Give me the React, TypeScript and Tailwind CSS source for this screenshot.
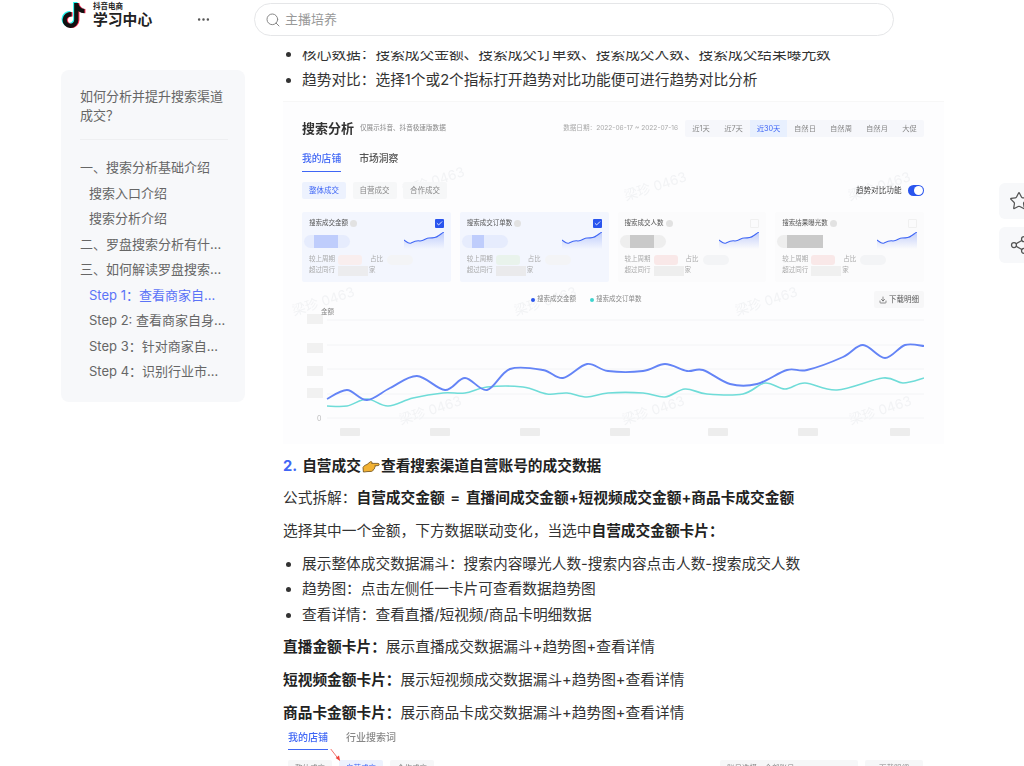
import { Search, Star, Share2, Download, Check, Ellipsis } from "lucide-react";
import { FaTiktok } from "react-icons/fa6";

const tocItems = [
  { label: "一、搜索分析基础介绍", indent: false },
  { label: "搜索入口介绍", indent: true },
  { label: "搜索分析介绍", indent: true },
  { label: "二、罗盘搜索分析有什么作用和价值", indent: false },
  { label: "三、如何解读罗盘搜索分析的数据", indent: false },
  { label: "Step 1：查看商家自身搜索成交", indent: true, active: true },
  { label: "Step 2: 查看商家自身搜索成交趋势", indent: true },
  { label: "Step 3：针对商家自身搜索问题", indent: true },
  { label: "Step 4：识别行业市场搜索机会", indent: true },
];

const ranges = [
  { label: "近1天", w: "w-[32px]" },
  { label: "近7天", w: "w-[33px]" },
  { label: "近30天", w: "w-[37px]" },
  { label: "自然日", w: "w-[36px]" },
  { label: "自然周", w: "w-[36px]" },
  { label: "自然月", w: "w-[36px]" },
  { label: "大促", w: "w-[29px]" },
];

const cards = [
  { title: "搜索成交金额", checked: true, smudge: "bg-[#f9eeee]", second: "bg-[#ececee]", valueW: "w-[24px]" },
  { title: "搜索成交订单数", checked: true, smudge: "bg-[#e9f3ec]", second: "bg-[#eaeaec]", valueW: "w-[12px]" },
  { title: "搜索成交人数", checked: false, smudge: "bg-[#f9e8e8]", second: "bg-[#eeeeee]", valueW: "w-[24px]" },
  { title: "搜索结果曝光数", checked: false, smudge: "bg-[#f9e8e8]", second: "bg-[#f0f0f0]", valueW: "w-[36px]" },
];

const blueLine: [number, number][] = [
  [327, 398], [347, 389], [367, 399], [390, 387], [417, 375], [445, 389], [465, 377], [487, 389], [510, 368],
  [543, 369], [563, 377], [587, 363], [608, 370], [643, 370], [665, 363], [687, 370], [703, 369], [730, 383],
  [757, 383], [787, 369], [807, 369], [843, 356], [863, 344], [885, 357], [905, 344], [924, 345],
];

const tealLine: [number, number][] = [
  [327, 405], [347, 405], [367, 398], [388, 405], [413, 397], [443, 392], [465, 392], [487, 386], [523, 386],
  [547, 393], [567, 392], [587, 396], [608, 392], [643, 392], [665, 396], [685, 388], [707, 393], [743, 393],
  [765, 382], [785, 388], [805, 382], [837, 389], [883, 377], [903, 382], [924, 377],
];

const watermarks = [
  "left-[118px] top-[67px]", "left-[340px] top-[72px]", "left-[564px] top-[72px]",
  "left-[8px] top-[187px]", "left-[230px] top-[187px]", "left-[451px] top-[187px]",
  "left-[115px] top-[296px]", "left-[338px] top-[296px]", "left-[565px] top-[296px]",
];

// catmull-rom through the points, good enough for the chart curves
function smooth(pts: [number, number][]) {
  let d = `M${pts[0][0]} ${pts[0][1]}`;
  for (let i = 0; i < pts.length - 1; i++) {
    const p0 = pts[i - 1] ?? pts[i];
    const p1 = pts[i];
    const p2 = pts[i + 1];
    const p3 = pts[i + 2] ?? p2;
    const c1x = p1[0] + (p2[0] - p0[0]) / 6;
    const c1y = p1[1] + (p2[1] - p0[1]) / 6;
    const c2x = p2[0] - (p3[0] - p1[0]) / 6;
    const c2y = p2[1] - (p3[1] - p1[1]) / 6;
    d += ` C${c1x} ${c1y} ${c2x} ${c2y} ${p2[0]} ${p2[1]}`;
  }
  return d;
}

function Logo() {
  return (
    <div className="relative h-[26px] w-[25px] shrink-0">
      <FaTiktok className="absolute left-0 top-0 h-[25px] w-[23px] text-[#25f4ee]" />
      <FaTiktok className="absolute left-[2px] top-[1px] h-[25px] w-[23px] text-[#fe2c55]" />
      <FaTiktok className="absolute left-[1px] top-[0.5px] h-[25px] w-[23px] text-[#111111]" />
    </div>
  );
}

function HandIcon() {
  return (
    <svg viewBox="0 0 18 13" className="mx-[1px] inline-block h-[13px] w-[18px] align-[-2px]">
      <path
        d="M1 7.5 C2 5.5 3.5 5 5 4.5 L8 2 C9 1.3 10 1.6 10 2.6 L9.6 3.4 L16 3.4 C17.6 3.4 17.6 5.6 16 5.6 L12.8 5.8 C13.6 6.6 13.2 7.6 12.4 7.8 C12.8 8.8 12 9.6 11.2 9.6 C11.2 10.8 10.2 11.4 9.2 11.4 L5 11.6 C3.6 11.8 2.4 12 1.4 12 Z"
        fill="#f2b233"
        stroke="#6b4a12"
        strokeWidth="0.8"
      />
    </svg>
  );
}

function Sparkline() {
  return (
    <svg viewBox="0 0 40 17" className="h-[17px] w-[40px] shrink-0">
      <defs>
        <linearGradient id="spark" x1="0" y1="0" x2="0" y2="1">
          <stop offset="0" stopColor="#3f66f5" stopOpacity="0.3" />
          <stop offset="1" stopColor="#3f66f5" stopOpacity="0" />
        </linearGradient>
      </defs>
      <path d="M0 8 C3 10 4 12 7 11 C11 9 13 8 16 9 C20 9 22 6 25 6 C29 6 32 6 34 4 C36 3 38 1 40 0 L40 17 L0 17 Z" fill="url(#spark)" />
      <path d="M0 8 C3 10 4 12 7 11 C11 9 13 8 16 9 C20 9 22 6 25 6 C29 6 32 6 34 4 C36 3 38 1 40 0" fill="none" stroke="#3f66f5" strokeWidth="1.1" />
    </svg>
  );
}

function MetricCard({ card }: { card: (typeof cards)[number] }) {
  const on = card.checked;
  return (
    <div className={`h-[70px] rounded-[2px] px-[7px] pt-[6px] ${on ? "bg-[#f3f6fe]" : "bg-[#fbfbfc]"}`}>
      <div className="flex h-[11px] items-center justify-between">
        <div className="flex items-center gap-[2px] text-[6.5px] text-[#555555]">
          {card.title}
          <span className="h-[7px] w-[7px] rounded-full bg-[#e2e2e2]" />
        </div>
        <span className={`flex h-[9px] w-[9px] items-center justify-center rounded-[1px] ${on ? "bg-[#2a55ee]" : "border border-[#f0f0f0]"}`}>
          {on && <Check className="h-[7px] w-[7px] text-white" strokeWidth={3} />}
        </span>
      </div>
      <div className="mt-[3px] flex items-start justify-between">
        <div className={`ml-[-5px] mt-[3px] flex h-[13px] w-[46px] items-center rounded-full pl-[10px] ${on ? "bg-[#e6ecfd]" : "bg-[#eeeeee]"}`}>
          <span className={`h-[13px] ${card.valueW} ${on ? "bg-[#bfcdfc]" : "bg-[#c9c9c9]"}`} />
        </div>
        <Sparkline />
      </div>
      <div className="mt-[5px] flex h-[11px] items-center text-[6.5px] text-[#aaaaaa]">
        较上周期
        <span className={`ml-[3px] h-[10px] w-[24px] rounded-[3px] ${card.smudge}`} />
        <span className="ml-[8px]">占比</span>
        <span className="ml-[4px] h-[10px] w-[26px] rounded-full bg-[#f3f4f6]" />
      </div>
      <div className="flex h-[11px] items-center text-[6.5px] text-[#aaaaaa]">
        超过同行
        <span className={`ml-[3px] h-[10px] w-[30px] ${card.second}`} />
        <span className="ml-[1px]">家</span>
      </div>
    </div>
  );
}

function Chart() {
  const grid = [319, 344, 368, 393, 417];
  const yBlocks = [318, 347, 370, 392];
  const xBlocks = [340, 430, 520, 610, 708, 798, 890];
  return (
    <svg viewBox="302 304 622 136" className="mt-[-3px] h-[136px] w-[622px]">
      {grid.map((y) => (
        <line key={y} x1="327" x2="924" y1={y} y2={y} stroke="#f3f4f6" strokeWidth="1" />
      ))}
      {yBlocks.map((y) => (
        <rect key={y} x="307" y={y - 5} width="16" height="10" fill="#f1f1f1" />
      ))}
      {xBlocks.map((x) => (
        <rect key={x} x={x} y="427" width="20" height="8" rx="1" fill="#ededed" />
      ))}
      <text x="321" y="312.5" fontSize="6.5" fill="#888888">金额</text>
      <text x="317" y="420" fontSize="7" fill="#bbbbbb">0</text>
      <path d={smooth(tealLine)} fill="none" stroke="#6fdcd8" strokeWidth="1.6" />
      <path d={smooth(blueLine)} fill="none" stroke="#6484f6" strokeWidth="1.9" />
    </svg>
  );
}

function ScreenshotOne() {
  return (
    <div className="h-[351px] w-[661px] pt-[8px]">
      <div className="relative h-[343px] overflow-hidden border-t border-[#f7f7f7] bg-[#fdfdfe] pl-[19px] pr-[20px] pt-[18px] blur-[0.6px]">
        <div className="flex h-[17px] items-center">
          <span className="text-[13px] font-bold text-[#333333]">搜索分析</span>
          <span className="ml-[6px] text-[6.6px] text-[#888888]">仅展示抖音、抖音极速版数据</span>
          <span className="ml-auto mr-[7px] text-[6.6px] text-[#aaaaaa]">数据日期：2022-06-17 ~ 2022-07-16</span>
          <div className="flex h-[17px] items-center rounded-[2px] bg-[#f6f7fb] text-[7.3px] text-[#888888]">
            {ranges.map((r) => (
              <span
                key={r.label}
                className={`flex h-[17px] items-center justify-center ${r.w} ${r.label === "近30天" ? "bg-[#e8f0fe] text-[#3f66f5]" : ""}`}
              >
                {r.label}
              </span>
            ))}
          </div>
        </div>

        <div className="mt-[14px] flex h-[21px] gap-[18px] text-[9.8px] font-medium">
          <span className="h-[21px] border-b-[1.5px] border-[#3f66f5] leading-[16px] text-[#3f66f5]">我的店铺</span>
          <span className="leading-[16px] text-[#555555]">市场洞察</span>
        </div>

        <div className="mt-[10px] flex h-[17px] items-center gap-[6.5px] text-[7.5px]">
          <span className="flex h-[17px] w-[44px] items-center justify-center rounded-[2px] bg-[#edf2fe] text-[#3f66f5]">整体成交</span>
          <span className="flex h-[17px] w-[44px] items-center justify-center rounded-[2px] bg-[#f6f7f8] text-[#888888]">自营成交</span>
          <span className="flex h-[17px] w-[44px] items-center justify-center rounded-[2px] bg-[#f6f7f8] text-[#888888]">合作成交</span>
          <span className="ml-auto text-[7.6px] text-[#444444]">趋势对比功能</span>
          <span className="flex h-[11px] w-[16px] items-center justify-end rounded-full bg-[#2a55ee] pr-[1px]">
            <span className="h-[9px] w-[9px] rounded-full bg-white" />
          </span>
        </div>

        <div className="mt-[13px] grid grid-cols-4 gap-[9px]">
          {cards.map((c) => (
            <MetricCard key={c.title} card={c} />
          ))}
        </div>

        <div className="mt-[9px] flex h-[17px] items-center text-[6.5px] text-[#888888]">
          <div className="ml-[229px] flex items-center gap-[2px]">
            <span className="h-[4px] w-[4px] rounded-full bg-[#2a55ee]" />
            搜索成交金额
          </div>
          <div className="ml-[14px] flex items-center gap-[2px]">
            <span className="h-[4px] w-[4px] rounded-full bg-[#3fd4cf]" />
            搜索成交订单数
          </div>
          <div className="ml-auto flex h-[17px] w-[50px] items-center justify-center gap-[2px] rounded-[2px] bg-[#f7f7f8] text-[7.5px] text-[#555555]">
            <Download className="h-[8px] w-[8px]" />
            下载明细
          </div>
        </div>

        <Chart />

        {/* faint watermark, stays behind the content */}
        {watermarks.map((pos) => (
          <span key={pos} className={`absolute -z-10 -rotate-[18deg] text-[13.5px] text-[#f2f3f5] ${pos}`}>
            梁珍 0463
          </span>
        ))}
      </div>
    </div>
  );
}

function ScreenshotTwo() {
  return (
    <div className="h-[52px] pl-[5px] pr-[21px] pt-[2px] blur-[0.4px]">
      <div className="flex h-[22px] gap-[18px] text-[10px] font-medium">
        <span className="h-[22px] border-b-[1.5px] border-[#3f66f5] pt-[1px] leading-[16px] text-[#3f66f5]">我的店铺</span>
        <span className="pt-[1px] leading-[16px] text-[#888888]">行业搜索词</span>
      </div>
      <div className="relative mt-[10px] flex gap-[7px] text-[7.5px] leading-[17px] text-[#888888]">
        <svg viewBox="0 0 14 16" className="absolute left-[42px] top-[-11px] h-[12px] w-[12px]">
          <path d="M0 0 L10 13" stroke="#f0433a" strokeWidth="1" />
          <path d="M6.5 12 L12.5 16 L11 8.5 Z" fill="#f0433a" />
        </svg>
        <span className="h-[17px] w-[44px] rounded-[2px] bg-[#f6f7f8] text-center">整体成交</span>
        <span className="h-[17px] w-[44px] rounded-[2px] bg-[#edf2fe] text-center text-[#3f66f5]">自营成交</span>
        <span className="h-[17px] w-[44px] rounded-[2px] bg-[#f6f7f8] text-center">合作成交</span>
        <span className="ml-auto h-[17px] w-[138px] rounded-[2px] bg-[#f6f7f8] pl-[7px]">账号选择：全部账号</span>
        <span className="h-[17px] w-[58px] rounded-[2px] bg-[#f6f7f8] text-center">下载明细</span>
      </div>
    </div>
  );
}

export default function App() {
  return (
    <div
      className="relative h-[766px] w-[1024px] overflow-hidden bg-white text-[#333333]"
      style={{ fontFamily: "Inter, 'Noto Sans CJK SC', sans-serif" }}
    >
      {/* Top bar */}
      <header className="relative z-10 flex h-[51px] items-start bg-white pl-[61px]">
        <div className="mt-[2px] flex w-[131px] items-start">
          <Logo />
          <div className="ml-[7px] flex flex-col">
            <span className="text-[7.5px] font-bold leading-[9px] text-[#222222]">抖音电商</span>
            <span className="text-[14.8px] font-semibold leading-[18px] text-[#222222]">学习中心</span>
          </div>
        </div>
        <Ellipsis className="ml-[4px] mt-[12px] h-[15px] w-[15px] text-[#555555]" />
        <div className="ml-[43px] mt-[3px] flex h-[33px] w-[640px] items-center rounded-full border border-[#e5e6e8] pl-[10px]">
          <Search className="h-[16px] w-[16px] text-[#888888]" strokeWidth={1.5} />
          <span className="ml-[4px] text-[13px] text-[#999999]">主播培养</span>
        </div>
      </header>

      <div className="flex">
        {/* Outline */}
        <aside className="ml-[61px] mt-[19px] h-[332px] w-[184px] shrink-0 rounded-lg bg-[#f7f8fa] pl-[19px] pr-[17px] pt-[17px] text-[13px] text-[#666666]">
          <p className="leading-[18.5px]">如何分析并提升搜索渠道成交？</p>
          <div className="mt-[15px] border-t border-[#eeeff1]" />
          <nav className="mt-[15px] w-[148px]">
            {tocItems.map((item) => (
              <div
                key={item.label}
                className={`truncate leading-[25.5px] ${item.indent ? "pl-[9px]" : ""} ${item.active ? "text-[#5b73f7]" : ""}`}
              >
                {item.label}
              </div>
            ))}
          </nav>
        </aside>

        {/* Article */}
        <main className="ml-[38px] mt-[-8.75px] w-[661px] shrink-0 text-[14.7px] leading-[25.5px]">
          <ul className="list-disc pl-[19px]">
            <li>核心数据：搜索成交金额、搜索成交订单数、搜索成交人数、搜索成交结果曝光数</li>
            <li>趋势对比：选择1个或2个指标打开趋势对比功能便可进行趋势对比分析</li>
          </ul>
          <ScreenshotOne />
          <h3 className="mt-[9.5px] font-semibold text-[#222222]">
            <span className="mr-[5px] font-bold text-[#3f66f5]">2.</span>
            自营成交
            <HandIcon />
            查看搜索渠道自营账号的成交数据
          </h3>
          <p className="mt-[6.25px]">
            公式拆解：
            <b className="font-semibold text-[#222222]">
              自营成交金额<span className="mx-[2px]"> = </span>直播间成交金额+短视频成交金额+商品卡成交金额
            </b>
          </p>
          <p className="mt-[7.5px]">
            选择其中一个金额，下方数据联动变化，当选中<b className="font-semibold text-[#222222]">自营成交金额卡片：</b>
          </p>
          <ul className="mt-[7.5px] list-disc pl-[19px]">
            <li>展示整体成交数据漏斗：搜索内容曝光人数-搜索内容点击人数-搜索成交人数</li>
            <li>趋势图：点击左侧任一卡片可查看数据趋势图</li>
            <li>查看详情：查看直播/短视频/商品卡明细数据</li>
          </ul>
          <p className="mt-[6.5px]">
            <b className="font-semibold text-[#222222]">直播金额卡片：</b>展示直播成交数据漏斗+趋势图+查看详情
          </p>
          <p className="mt-[7.5px]">
            <b className="font-semibold text-[#222222]">短视频金额卡片：</b>展示短视频成交数据漏斗+趋势图+查看详情
          </p>
          <p className="mt-[7.5px]">
            <b className="font-semibold text-[#222222]">商品卡金额卡片：</b>展示商品卡成交数据漏斗+趋势图+查看详情
          </p>
          <ScreenshotTwo />
        </main>
      </div>

      {/* Floating actions */}
      <div className="absolute left-[999px] top-[183px] flex flex-col gap-[8px]">
        <span className="flex h-[36px] w-[40px] items-center justify-center rounded-md bg-[#f7f8fa]">
          <Star className="h-[20px] w-[20px] text-[#555555]" strokeWidth={1.5} />
        </span>
        <span className="flex h-[36px] w-[40px] items-center justify-center rounded-md bg-[#f7f8fa]">
          <Share2 className="h-[20px] w-[20px] text-[#555555]" strokeWidth={1.5} />
        </span>
      </div>
    </div>
  );
}
